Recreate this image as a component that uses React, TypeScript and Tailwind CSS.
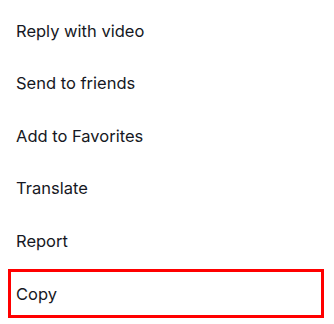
const items = ["Reply with video", "Send to friends", "Add to Favorites", "Translate", "Report"];

export default function App() {
  return (
    <div className="w-[334px] h-[324px] bg-white pt-[4.7px] text-[16.5px] text-[#161823]" style={{ fontFamily: "Inter, Lato, sans-serif" }}>
      {items.map((item) => (
        <div key={item} className="h-[52.6px] flex items-center px-4">
          {item}
        </div>
      ))}
      <div className="h-[52.6px] flex items-center">
        <div className="mx-2 w-[316px] h-[49px] border-[3px] border-[#ff0000] flex items-center px-[5px]">
          Copy
        </div>
      </div>
    </div>
  );
}
